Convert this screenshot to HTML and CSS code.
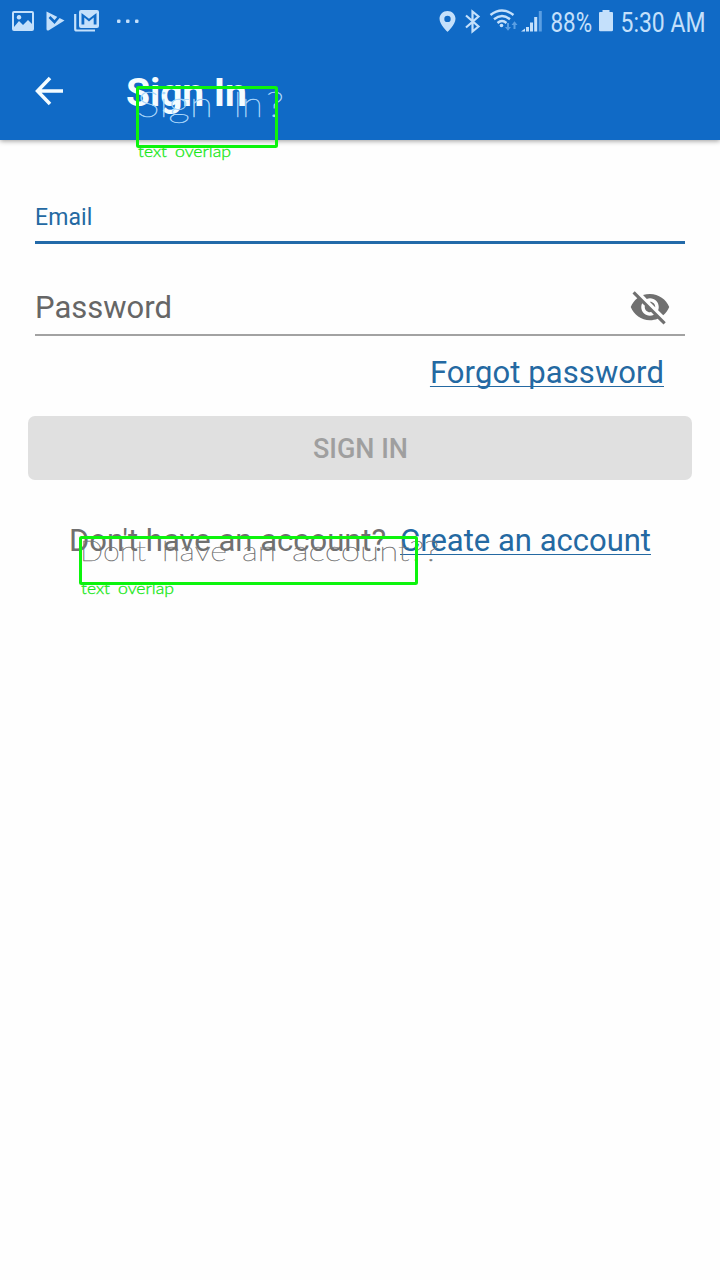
FILE: index.html
```html
<!DOCTYPE html>
<html lang="en">
<head>
<meta charset="utf-8">
<title>Sign In</title>
<link rel="stylesheet" href="styles.css">
</head>
<body>
<div class="screen">
  <header class="header">
    <div class="status">
      <svg class="status-left" width="150" height="44" viewBox="0 0 150 44">
        <path fill-rule="evenodd" d="M14 11h18a2 2 0 0 1 2 2v16a2 2 0 0 1-2 2H14a2 2 0 0 1-2-2V13a2 2 0 0 1 2-2zM14 27l5-6 4 4 5-5 4 4v-11H14zM19 15a2.300 2.300 0 1 0 .01 0z"/>
        <path d="M46.500 11.500L64.500 20.500 48.500 30.500q-2 .500-2-1.500z"/>
        <path class="cut" d="M49.500 17l5 5 9-10.500"/>
        <path d="M51.500 17.500l3 3 6-7" fill="none"/>
        <path fill-rule="evenodd" d="M81 10h16q2 0 2 2v14q0 2-2 2H81q-2 0-2-2V12q0-2 2-2zM81.500 13v11.500h2.800v-7l4.700 4 4.700-4v7h2.800V13l-7.500 5.800z"/>
        <path class="line" d="M75.200 14v15q0 1.500 1.500 1.500H95"/>
        <rect x="117" y="19.500" width="3.500" height="3.500" rx="1"/><rect x="126" y="19.500" width="3.500" height="3.500" rx="1"/><rect x="135" y="19.500" width="3.500" height="3.500" rx="1"/>
      </svg>
      <svg class="status-right" width="290" height="44" viewBox="430 0 290 44">
        <path fill-rule="evenodd" d="M447.500 11c-4.500 0-8 3.500-8 7.800 0 5.700 8 13.200 8 13.200s8-7.500 8-13.200c0-4.300-3.500-7.800-8-7.800zm0 4.700a3.200 3.200 0 1 1 0 6.400 3.200 3.200 0 0 1 0-6.400z"/>
        <path class="line" d="M466 15.500l12.500 11-6 5V11.500l6 5-12.500 11"/>
        <path class="wifi" d="M490.500 15q11.500-9 23 0M494 19.200q8-6.400 16 0M497.500 23q4.500-3.800 9 0"/>
        <circle cx="501.500" cy="25.500" r="1.800"/>
        <path class="dim" d="M507 23h2v4h2l-3 3.800-3-3.800h2zM513.500 29h2v-4h2l-3-3.800-3 3.800h2z"/>
        <path d="M521 31.500l4-3v3zM526 27h3v4.500h-3zM530 22.500h3v9h-3zM534.200 17h3v14.500h-3z"/>
        <path class="dim" d="M538.800 11h3v20.500h-3z"/>
        <text x="550.500" y="31.500" textLength="41.500" lengthAdjust="spacingAndGlyphs">88%</text>
        <path d="M602.500 10h7v2h2.500q1 0 1 1v17q0 1.300-1.300 1.300h-11.400q-1.300 0-1.300-1.300V13q0-1 1-1h2.500z"/>
        <text x="620.500" y="31.500" textLength="85" lengthAdjust="spacingAndGlyphs">5:30 AM</text>
      </svg>
    </div>
    <div class="toolbar">
      <svg class="back" width="32" height="32" viewBox="0 0 32 32"><path d="M30 16H5M17 3L4.500 16 17 29"/></svg>
      <h1 class="title">Sign In</h1>
    </div>
  </header>
  <main class="form">
    <div class="field email"><label>Email</label></div>
    <div class="field password">
      <label>Password</label>
      <svg class="eye" width="42" height="42" viewBox="0 0 24 24"><path d="M12 7c2.760 0 5 2.240 5 5 0 .650-.130 1.260-.360 1.830l2.920 2.920c1.510-1.260 2.700-2.890 3.430-4.750-1.730-4.390-6-7.500-11-7.500-1.400 0-2.740.250-3.980.700l2.160 2.160C10.740 7.130 11.350 7 12 7zM2 4.270l2.280 2.280.460.460C3.080 8.300 1.780 10.020 1 12c1.730 4.390 6 7.500 11 7.500 1.550 0 3.030-.300 4.380-.840l.420.420L19.730 22 21 20.730 3.270 3 2 4.270zM7.530 9.800l1.550 1.550c-.050.210-.080.430-.080.650 0 1.660 1.340 3 3 3 .220 0 .440-.030.650-.080l1.550 1.550c-.670.330-1.410.530-2.200.530-2.760 0-5-2.240-5-5 0-.790.200-1.530.530-2.200zm4.310-.780l3.150 3.150.020-.160c0-1.660-1.340-3-3-3l-.170.010z"/></svg>
    </div>
    <div class="forgot"><a class="link">Forgot password</a></div>
    <button class="submit" disabled>SIGN IN</button>
    <p class="signup"><span class="question">Don't have an account?</span><a class="link">Create an account</a></p>
  </main>
  <svg class="annotations" width="720" height="1280" viewBox="0 0 720 1280">
    <g class="ghost light">
      <text x="137" y="117" textLength="76" lengthAdjust="spacingAndGlyphs">Sign</text><text x="233" y="117" textLength="30" lengthAdjust="spacingAndGlyphs">In</text><text x="266" y="117" textLength="18" lengthAdjust="spacingAndGlyphs">?</text>
    </g>
    <g class="ghost gray">
      <text x="80" y="561" textLength="66" lengthAdjust="spacingAndGlyphs">Dont</text><text x="162" y="561" textLength="65" lengthAdjust="spacingAndGlyphs">have</text><text x="242" y="561" textLength="34" lengthAdjust="spacingAndGlyphs">an</text><text x="292" y="561" textLength="147" lengthAdjust="spacingAndGlyphs">account??</text>
    </g>
    <rect class="box" x="137.500" y="87.500" width="139" height="59" rx="1"/>
    <rect class="box" x="80.500" y="537.500" width="336" height="46" rx="1"/>
    <g class="note">
      <text x="138" y="157" textLength="29" lengthAdjust="spacingAndGlyphs">text</text><text x="175" y="157" textLength="56" lengthAdjust="spacingAndGlyphs">overlap</text>
      <text x="81" y="594" textLength="29" lengthAdjust="spacingAndGlyphs">text</text><text x="118" y="594" textLength="56" lengthAdjust="spacingAndGlyphs">overlap</text>
    </g>
  </svg>
</div>
</body>
</html>
```
FILE: styles.css
```css
* { box-sizing: border-box; }
body { margin: 0; background: #fefefe; font-family: Roboto, sans-serif; }
.screen { position: relative; width: 720px; height: 1280px; overflow: hidden; }
.header { height: 140px; background: #106ac6; box-shadow: 0 1px 5px rgba(0,0,0,.4); }
.status { display: flex; justify-content: space-between; height: 44px; fill: #c4e0fb; }
.status text { font-size: 27px; }
.status .cut { fill: none; stroke: #106ac6; stroke-width: 2.600; }
.status .line { fill: none; stroke: #c4e0fb; stroke-width: 2.200; }
.status .wifi { fill: none; stroke: #c4e0fb; stroke-width: 2.400; }
.status .dim { fill: #5b9fe3; }
.toolbar { display: flex; align-items: center; height: 96px; padding: 0 0 2px 33px; }
.back { fill: none; stroke: #f4fcff; stroke-width: 3.500; }
.title { margin: 0 0 0 61px; padding-top: 4px; font-size: 39px; font-weight: 700; letter-spacing: -.1px; line-height: 46px; color: #f4fcff; }
.form { display: flex; flex-direction: column; padding: 60px 28px 0; }
.field { display: flex; margin: 0 7px; }
.email { height: 44px; border-bottom: 3px solid #236aa9; font-size: 23px; letter-spacing: .1px; line-height: 36px; color: #2469a2; }
.password { height: 92px; padding-top: 42px; border-bottom: 2px solid #a2a2a2; justify-content: space-between; font-size: 31px; line-height: 44px; color: #666; }
.eye { margin-right: 14px; fill: #707070; }
.forgot { height: 80px; padding: 16px 28px 0 0; text-align: right; font-size: 31px; letter-spacing: .1px; line-height: 42px; }
.link { color: #2469a2; text-decoration: underline; text-decoration-thickness: 1px; text-underline-offset: 3px; text-decoration-skip-ink: none; }
.submit { height: 64px; padding: 2px 0 0 1px; border: 0; border-radius: 7px; background: #e0e0e0; color: #9f9f9f; font: 500 27px Roboto, sans-serif; }
.signup { display: flex; justify-content: space-between; margin: 40px 41px 0; font-size: 31px; line-height: 42px; }
.question { color: #707070; }
.annotations { position: absolute; inset: 0; }
.ghost { font-family: Lato, sans-serif; font-weight: 100; }
.light { font-size: 35px; fill: #a8d5fa; stroke: #a8d5fa; stroke-width: .500; }
.gray { font-size: 27px; fill: #777; stroke: #777; stroke-width: .400; }
.box { fill: none; stroke: #0cf40c; stroke-width: 3; }
.note { font-family: Lato, sans-serif; font-size: 15.500px; font-weight: 300; fill: #17e817; stroke: #17e817; stroke-width: .300; }
```
